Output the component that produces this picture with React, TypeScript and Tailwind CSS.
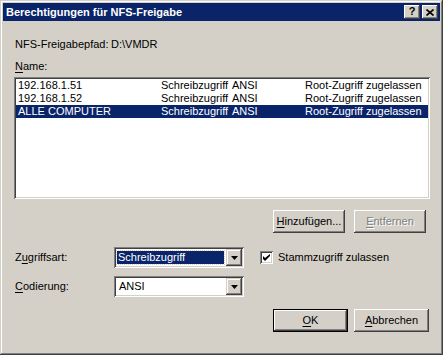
import React from 'react';

const raised =
  'shadow-[inset_-1px_-1px_#404040,inset_1px_1px_#ffffff,inset_-2px_-2px_#808080,inset_2px_2px_#d4d0c8]';
const sunken =
  'shadow-[inset_1px_1px_#808080,inset_-1px_-1px_#ffffff,inset_2px_2px_#404040,inset_-2px_-2px_#d4d0c8]';

const rows = [
  { name: '192.168.1.51', selected: false },
  { name: '192.168.1.52', selected: false },
  { name: 'ALLE COMPUTER', selected: true },
];

const Key: React.FC<{ children: React.ReactNode }> = ({ children }) => (
  <span className="underline underline-offset-[2px]">{children}</span>
);

const Button: React.FC<{ w: string; isDefault?: boolean; disabled?: boolean; children: React.ReactNode }> = ({
  w,
  isDefault,
  disabled,
  children,
}) => (
  <div className={`${w} h-[23px] ${isDefault ? 'border border-black' : ''}`}>
    <div
      className={`w-full h-full flex items-center justify-center bg-[#d4d0c8] ${raised} ${
        disabled ? 'text-[#808080] [text-shadow:1px_1px_#ffffff]' : 'text-black'
      }`}
    >
      {children}
    </div>
  </div>
);

const Combo: React.FC<{ value: string; focused?: boolean }> = ({ value, focused }) => (
  <div className={`w-[130px] h-[21px] bg-white ${sunken} flex items-center p-[2px]`}>
    <div className="flex-1 h-full flex items-center pl-[1px] pr-[2px]">
      {focused ? (
        <div className="h-[13px] w-full bg-[#0a246a] text-white outline-1 outline-dotted outline-[#d4d0c8] flex items-center pl-[1px]">
          {value}
        </div>
      ) : (
        <div className="pl-[2px]">{value}</div>
      )}
    </div>
    <div className={`w-[16px] h-[17px] bg-[#d4d0c8] flex items-center justify-center shadow-[inset_-1px_-1px_#404040,inset_1px_1px_#d4d0c8,inset_-2px_-2px_#808080,inset_2px_2px_#ffffff]`}>
      <svg width="7" height="4" viewBox="0 0 7 4">
        <path d="M0 0h7L3.5 4z" fill="#000" />
      </svg>
    </div>
  </div>
);

export default function App() {
  return (
    <div
      className="w-[443px] h-[355px] bg-[#d4d0c8] p-[3px] flex flex-col text-[11px] leading-[13px] text-black shadow-[inset_-1px_-1px_#404040,inset_1px_1px_#d4d0c8,inset_-2px_-2px_#808080,inset_2px_2px_#ffffff]"
      style={{ fontFamily: '"Liberation Sans", Arial, sans-serif' }}
    >
      <div className="h-[18px] bg-[#0a246a] flex items-center justify-between pl-[3px] pr-[2px]">
        <span className="text-white font-bold text-[11px]">Berechtigungen für NFS-Freigabe</span>
        <div className="flex gap-[2px]">
          <div className={`w-[16px] h-[14px] bg-[#d4d0c8] ${raised} flex items-center justify-center font-bold text-[11px] leading-none pb-[1px]`}>
            ?
          </div>
          <div className={`w-[16px] h-[14px] bg-[#d4d0c8] ${raised} flex items-center justify-center`}>
            <svg width="8" height="7" viewBox="0 0 8 7">
              <path d="M0.5 0.5L7.5 6.5M7.5 0.5L0.5 6.5" stroke="#000" strokeWidth="1.6" />
            </svg>
          </div>
        </div>
      </div>

      <div className="pl-[11px] pr-[10px] flex flex-col">
        <div className="mt-[17px] flex pl-[1px]">
          <span className="w-[96px]">NFS-Freigabepfad:</span>
          <span>D:\VMDR</span>
        </div>
        <div className="mt-[9px] pl-[1px]">
          <Key>N</Key>ame:
        </div>
        <div className={`mt-[4px] h-[122px] bg-white ${sunken} p-[2px] flex flex-col`}>
          {rows.map((r) => (
            <div
              key={r.name}
              className={`h-[13px] flex items-center ${r.selected ? 'bg-[#0a246a] text-white' : ''}`}
            >
              <span className="w-[145px] pl-[2px]">{r.name}</span>
              <span className="w-[71px]">Schreibzugriff</span>
              <span className="w-[73px]">ANSI</span>
              <span>Root-Zugriff zugelassen</span>
            </div>
          ))}
        </div>

        <div className="mt-[11px] flex justify-end gap-[9px] pr-[4px]">
          <Button w="w-[72px]">
            <span>
              <Key>H</Key>inzufügen...
            </span>
          </Button>
          <Button w="w-[72px]" disabled>
            <span>
              <Key>E</Key>ntfernen
            </span>
          </Button>
        </div>

        <div className="mt-[14px] flex items-center">
          <span className="w-[100px] pl-[1px]">
            Z<Key>u</Key>griffsart:
          </span>
          <Combo value="Schreibzugriff" focused />
          <div className="ml-[16px] flex items-center">
            <div className={`w-[13px] h-[13px] bg-white ${sunken} flex items-center justify-center`}>
              <svg width="7" height="7" viewBox="0 0 7 7">
                <path d="M0 2v3l2 2 5-5V-0L2 4z" fill="#000" />
              </svg>
            </div>
            <span className="ml-[5px]">Stammzugriff zulassen</span>
          </div>
        </div>

        <div className="mt-[8px] flex items-center">
          <span className="w-[100px] pl-[1px]">
            <Key>C</Key>odierung:
          </span>
          <Combo value="ANSI" />
        </div>

        <div className="mt-[12px] flex justify-end gap-[6px] pr-[1px]">
          <Button w="w-[75px]" isDefault>
            <span>
              <Key>O</Key>K
            </span>
          </Button>
          <Button w="w-[75px]">
            <span>
              <Key>A</Key>bbrechen
            </span>
          </Button>
        </div>
      </div>
    </div>
  );
}
